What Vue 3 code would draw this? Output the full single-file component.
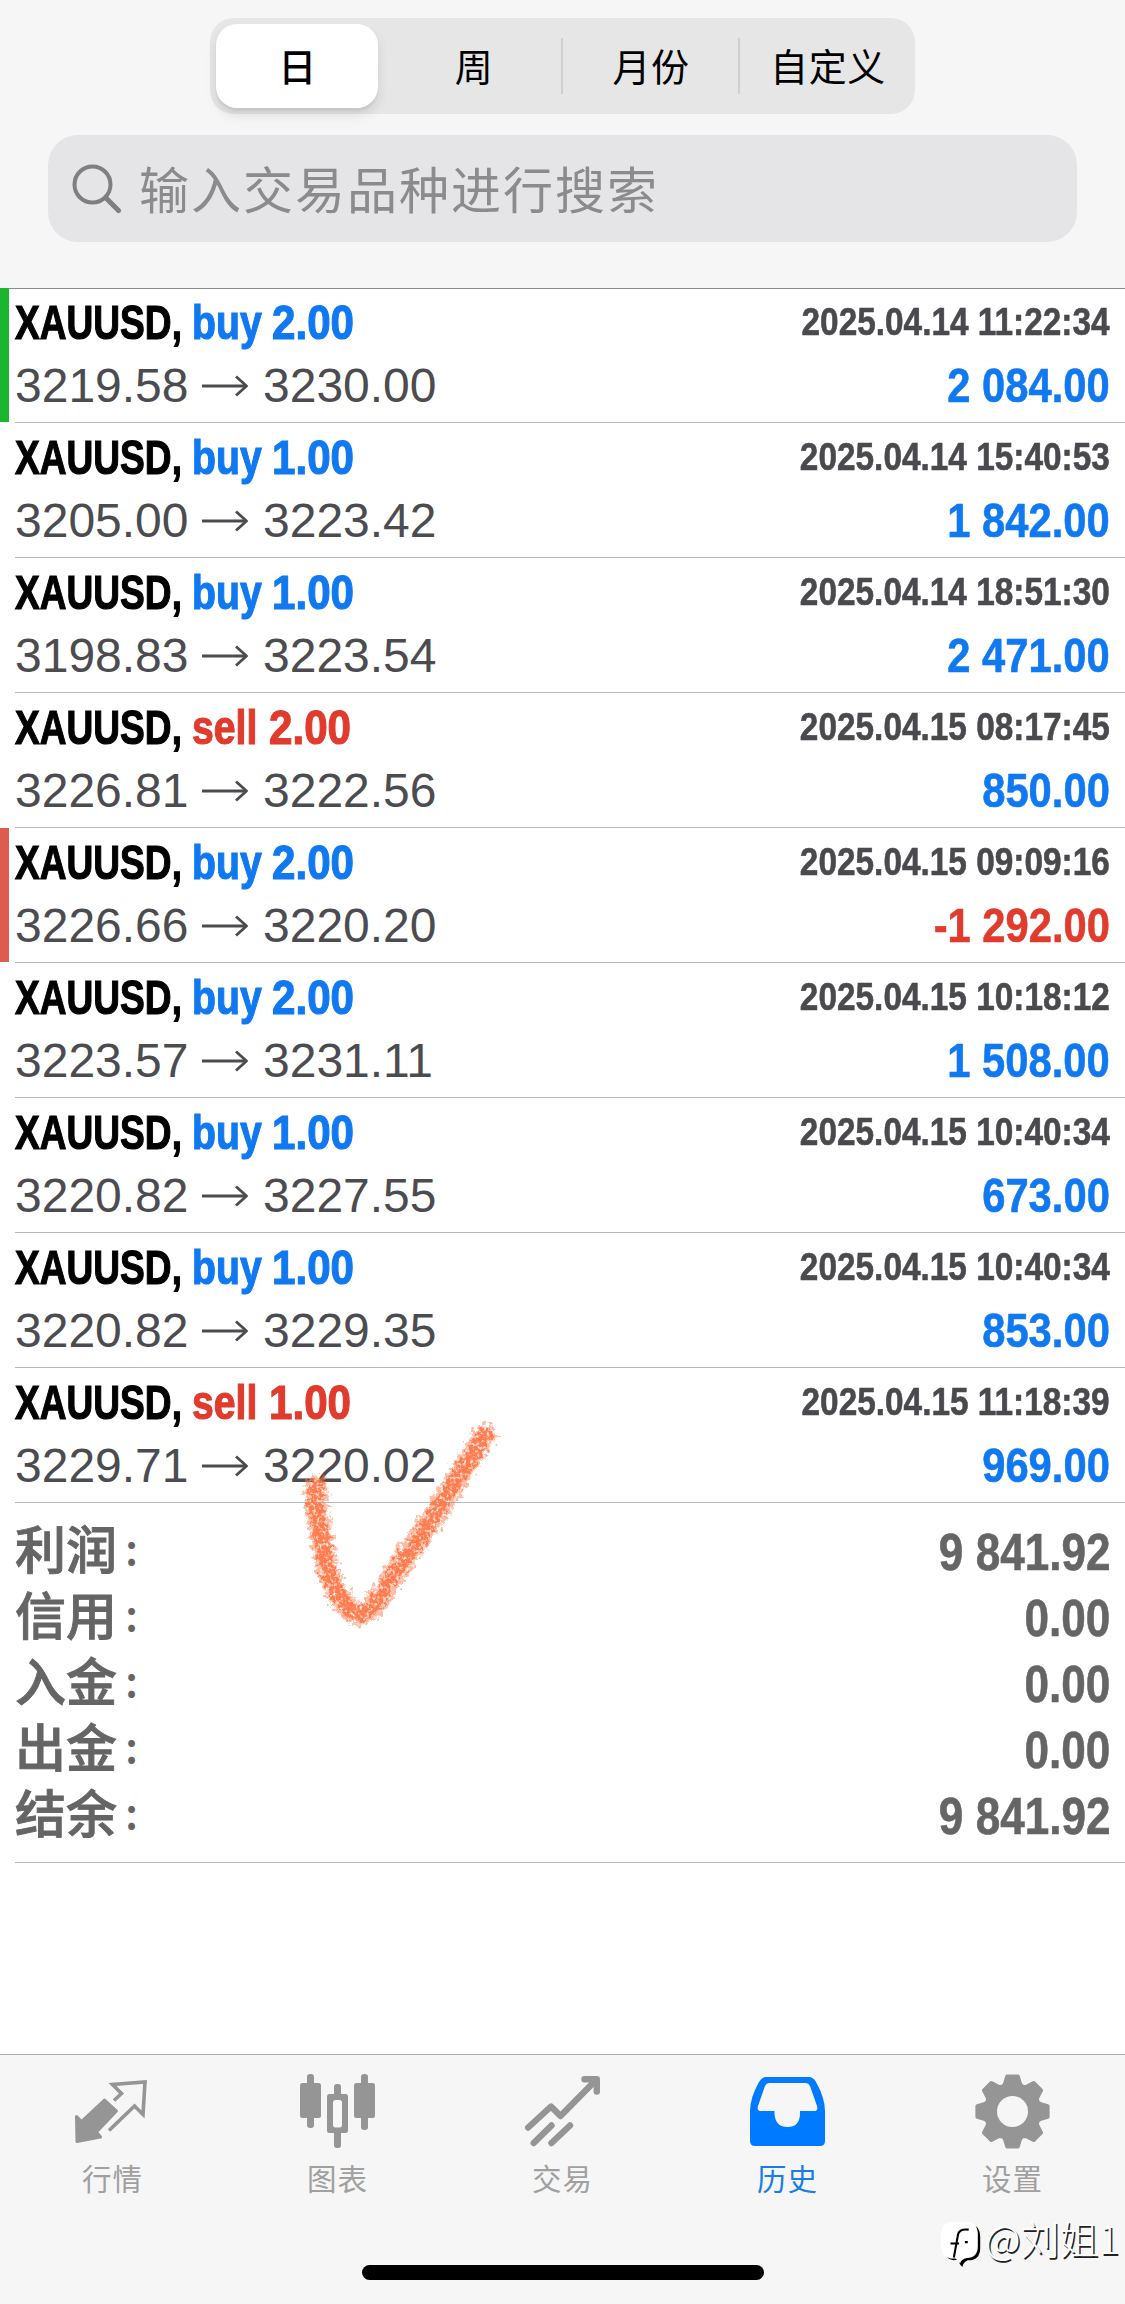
<script setup>
const ranges = ['日', '周', '月份', '自定义']

const deals = [
  { side: 'buy', volume: '2.00', open: '3219.58', close: '3230.00', time: '2025.04.14 11:22:34', profit: '2 084.00', mark: 'tp' },
  { side: 'buy', volume: '1.00', open: '3205.00', close: '3223.42', time: '2025.04.14 15:40:53', profit: '1 842.00' },
  { side: 'buy', volume: '1.00', open: '3198.83', close: '3223.54', time: '2025.04.14 18:51:30', profit: '2 471.00' },
  { side: 'sell', volume: '2.00', open: '3226.81', close: '3222.56', time: '2025.04.15 08:17:45', profit: '850.00' },
  { side: 'buy', volume: '2.00', open: '3226.66', close: '3220.20', time: '2025.04.15 09:09:16', profit: '-1 292.00', mark: 'sl' },
  { side: 'buy', volume: '2.00', open: '3223.57', close: '3231.11', time: '2025.04.15 10:18:12', profit: '1 508.00' },
  { side: 'buy', volume: '1.00', open: '3220.82', close: '3227.55', time: '2025.04.15 10:40:34', profit: '673.00' },
  { side: 'buy', volume: '1.00', open: '3220.82', close: '3229.35', time: '2025.04.15 10:40:34', profit: '853.00' },
  { side: 'sell', volume: '1.00', open: '3229.71', close: '3220.02', time: '2025.04.15 11:18:39', profit: '969.00' },
]

const totals = [
  ['利润', '9 841.92'],
  ['信用', '0.00'],
  ['入金', '0.00'],
  ['出金', '0.00'],
  ['结余', '9 841.92'],
]

const tabs = [
  { id: 'quotes', label: '行情' },
  { id: 'charts', label: '图表' },
  { id: 'trade', label: '交易' },
  { id: 'history', label: '历史', active: true },
  { id: 'settings', label: '设置' },
]

// Gear outline: eight teeth, each described by tip and root points in polar form.
const gearPoints = Array.from({ length: 8 }, (_, i) =>
  [[-20, 27], [-15.5, 28.5], [-8.5, 35.5], [8.5, 35.5], [15.5, 28.5], [20, 27]].map(([deg, r]) => {
    const a = ((i * 45 + deg) * Math.PI) / 180
    return `${(37.5 + r * Math.sin(a)).toFixed(2)},${(37.5 - r * Math.cos(a)).toFixed(2)}`
  }).join(' ')
).join(' ')
</script>

<template>
  <div class="screen">
    <header class="header">
      <div class="segments">
        <div v-for="(r, i) in ranges" :key="r" class="segment" :class="{ selected: i === 0, divided: i > 1 }">
          <span>{{ r }}</span>
        </div>
      </div>
      <div class="search">
        <svg class="lens" viewBox="0 0 50 50" fill="none" stroke="#7f7f82" stroke-linecap="round">
          <circle cx="20.5" cy="20.5" r="18" stroke-width="4" />
          <path d="M34 34L46.5 46.5" stroke-width="5" />
        </svg>
        <span>输入交易品种进行搜索</span>
      </div>
    </header>

    <main class="deals">
      <article v-for="(d, i) in deals" :key="i" class="deal" :class="d.mark">
        <div class="line">
          <span class="cell symbol"><b>XAUUSD,</b></span>
          <span class="cell side" :class="d.side"><b>{{ d.side }}</b></span>
          <span class="cell volume" :class="d.side"><b>{{ d.volume }}</b></span>
          <span class="time">{{ d.time }}</span>
        </div>
        <div class="line second">
          <span class="price">{{ d.open }}</span>
          <svg class="arrow" viewBox="0 0 46 24" fill="none" stroke="#4c4c50" stroke-width="2.8">
            <path d="M0 12H44" /><path d="M34 2.5L44.5 12L34 21.5" stroke-linejoin="round" />
          </svg>
          <span class="price">{{ d.close }}</span>
          <span class="profit" :class="{ loss: d.profit[0] === '-' }">{{ d.profit }}</span>
        </div>
      </article>
    </main>

    <section class="totals">
      <div v-for="t in totals" :key="t[0]" class="total">
        <span class="name">{{ t[0] }}</span>
        <span class="colon">:</span>
        <span class="sum">{{ t[1] }}</span>
      </div>
    </section>

    <nav class="tabbar">
      <div class="tabs">
        <div v-for="t in tabs" :key="t.id" class="tab" :class="{ active: t.active }">
          <svg class="icon" viewBox="0 0 75 75">
            <g v-if="t.id === 'quotes'">
              <path d="M29.5 26L41.5 37L21.5 58L25.5 63L2 67.5L1.5 42.5L6.5 47.5Z" fill="currentColor" stroke="currentColor" stroke-width="3" stroke-linejoin="round" />
              <path d="M39 26.5L46.5 19.5L37.5 10.5L70 8L68 40.5L59.5 32L34 56.5" fill="none" stroke="currentColor" stroke-width="3.6" stroke-linejoin="miter" />
            </g>
            <g v-else-if="t.id === 'charts'" fill="currentColor">
              <rect x="0" y="9" width="21" height="35" rx="2.5" /><rect x="7" y="0" width="7" height="54" rx="3" />
              <rect x="54" y="9" width="21" height="35" rx="2.5" /><rect x="61" y="0" width="7" height="56" rx="3" />
              <rect x="34" y="10" width="7" height="64" rx="3" /><rect x="27" y="20" width="21" height="39" rx="2.5" />
              <rect x="33" y="26" width="9" height="27.5" rx="2.5" fill="#f8f8f8" />
            </g>
            <g v-else-if="t.id === 'trade'" fill="none" stroke="currentColor" stroke-width="6.4" stroke-linecap="round" stroke-linejoin="round">
              <path d="M3.2 53.5L26 32.5L35.5 42L71 6" /><path d="M59.5 5.2H71.8V17.5" />
              <path d="M8.7 69L26.5 51.5M26.5 69L45 51.5" />
            </g>
            <path v-else-if="t.id === 'history'" fill="currentColor" fill-rule="evenodd" d="M16 3H59Q63 3 66 8Q75 24 75 37V67Q75 72 70 72H5Q0 72 0 67V37Q0 24 9 8Q12 3 16 3ZM19 9Q16.500 9 15 12L8 32Q6.500 37 11 37H24.500V40Q25.500 53 37.500 53Q49.500 53 50 40V37H64Q68.500 37 67 32L60 12Q58.500 9 56 9Z" />
            <g v-else>
              <polygon :points="gearPoints" fill="currentColor" stroke="currentColor" stroke-width="4" stroke-linejoin="round" />
              <circle cx="37.5" cy="37.500" r="15.500" fill="#f6f6f6" />
            </g>
          </svg>
          <span class="label">{{ t.label }}</span>
        </div>
      </div>
      <div class="home"></div>
    </nav>

    <!-- Hand-drawn crayon tick over the list -->
    <svg class="tick" viewBox="0 0 230 230">
      <defs>
        <filter id="crayon" x="-10%" y="-10%" width="120%" height="120%">
          <feTurbulence type="fractalNoise" baseFrequency="0.2" numOctaves="3" seed="4" result="n" />
          <feDisplacementMap in="SourceGraphic" in2="n" scale="15" xChannelSelector="R" yChannelSelector="G" result="d" />
          <feTurbulence type="fractalNoise" baseFrequency="0.3" numOctaves="2" seed="9" />
          <feColorMatrix values="0 0 0 0 0  0 0 0 0 0  0 0 0 0 0  0 0 0 -3 2.5" result="g" />
          <feComposite in="d" in2="g" operator="in" />
          <feGaussianBlur stdDeviation=".6" />
        </filter>
      </defs>
      <g filter="url(#crayon)" fill="none" stroke="#ff7747" stroke-linecap="round" stroke-linejoin="round">
        <path d="M37 76C34 96 40 120 45 147C51 174 62 200 79 204C94 204 104 178 116 161L138 130L163 92L184 57L205 25" stroke-width="23" opacity=".5" />
        <path d="M37 76C34 96 40 120 45 147C51 174 62 200 79 204C94 204 104 178 116 161L138 130L163 92L184 57L205 25" stroke-width="15" opacity=".9" />
      </g>
    </svg>

    <div class="watermark">
      <svg viewBox="0 0 42 48">
        <path d="M13 2H27Q40 2 40 16V27Q40 40 27 40Q22 42 21.500 47Q17 43 18 39L12 40Q2 38 2 27V14Q2 2 13 2Z" fill="#000" />
        <path d="M12 0H25Q37.500 0 37.500 13V25Q37.500 37.500 26 37.500Q20 39 19 43Q16 39 14 38L9 38Q-1 36 -1 25V12Q0 0 12 0Z" fill="#fff" />
        <path d="M28 8Q17 6.500 16.500 15L12.500 37M9 22.500H18M24 21H27" fill="none" stroke="#000" stroke-width="2.200" />
      </svg>
      <span>@刘姐1</span>
    </div>
  </div>
</template>

<style>
body { margin: 0; background: #fff; }
</style>

<style scoped>
.screen {
  position: relative;
  display: flex;
  flex-direction: column;
  width: 1125px;
  height: 2304px;
  overflow: hidden;
  background: #fff;
  font-family: "Liberation Sans", "Noto Sans CJK SC", sans-serif;
}
.header {
  box-sizing: border-box;
  display: flex;
  flex-direction: column;
  align-items: center;
  flex: none;
  height: 289px;
  padding-top: 18px;
  background: #f6f6f7;
  border-bottom: 1px solid #8b8b8d;
}
.segments {
  box-sizing: border-box;
  display: flex;
  align-items: center;
  width: 705px;
  height: 96px;
  border-radius: 24px;
  background: #e6e6e6;
}
.segment {
  box-sizing: border-box;
  flex: 1;
  display: flex;
  align-items: center;
  justify-content: center;
  height: 56px;
  padding-left: 1px;
  font: 400 38px/56px "Noto Sans CJK SC", sans-serif;
  letter-spacing: .6px;
  color: #000;
}
.segment span { margin-top: -3px; }
.segment.divided { border-left: 2px solid #cfcfd0; }
.segment.selected {
  flex: none;
  width: 162px;
  height: 84px;
  margin: 0 8px 0 6px;
  border-radius: 21px;
  background: #fff;
  box-shadow: 0 7px 12px rgba(0, 0, 0, .1), 0 3px 2px rgba(0, 0, 0, .05);
  font-weight: 500;
}
.search {
  box-sizing: border-box;
  display: flex;
  align-items: center;
  width: 1029px;
  height: 107px;
  margin-top: 21px;
  padding-left: 24px;
  border-radius: 30px;
  background: #e5e5e7;
  color: #8b8b8e;
  font: 400 50px/72px "Noto Sans CJK SC", sans-serif;
  letter-spacing: 2px;
}
.search span { margin-top: -4px; }
.lens { width: 50px; height: 50px; margin-right: 17px; }

.deals { flex: none; margin-top: -1px; }
.deal {
  position: relative;
  box-sizing: border-box;
  height: 135px;
  margin-left: 15px;
  padding: 4px 15px 0 0;
  border-bottom: 1px solid #b9b9bb;
}
.deal.tp::before, .deal.sl::before {
  content: "";
  position: absolute;
  left: -15px;
  top: 0;
  width: 9px;
  height: 134px;
  background: #1cb52f;
}
.deal.sl::before { background: #dd5b4f; }
.line { display: flex; height: 60px; line-height: 60px; white-space: nowrap; }
.second { margin-top: 3px; align-items: center; }
.cell { display: block; font-size: 49px; }
.cell b { display: inline-block; transform-origin: 0 50%; -webkit-text-stroke: 1.2px currentColor; }
.symbol { width: 177px; color: #000; }
.symbol b { transform: scaleX(.757); }
.side { width: 80px; }
.side.sell { width: 77px; }
.side b { transform: scaleX(.8); }
.volume { width: 90px; }
.volume b { transform: scaleX(.86); }
.buy { color: #1079f2; }
.sell { color: #e03b2c; }
.time, .profit, .sum {
  margin-left: auto;
  font-weight: 700;
  transform-origin: 100% 50%;
  -webkit-text-stroke: .6px currentColor;
}
.time { margin-top: -1px; font-size: 39.500px; color: #4a4a4e; transform: scaleX(.845); }
.price { width: 173px; padding-top: 2px; font-size: 48px; color: #4c4c50; }
.arrow { flex: none; width: 46px; height: 24px; margin: 1px 15px 0 14px; }
.profit { font-size: 49px; color: #1079f2; transform: scaleX(.852); }
.profit.loss { color: #e03b2c; }

.totals {
  box-sizing: border-box;
  flex: none;
  height: 360px;
  margin-left: 15px;
  padding: 16px 15px 0 0;
  border-bottom: 1px solid #b9b9bb;
}
.total { display: flex; height: 66px; line-height: 66px; color: #656565; }
.name { font-size: 51px; font-weight: 500; -webkit-text-stroke: .9px currentColor; }
.colon {
  margin: -6px 0 0 8px;
  font: 500 44px/66px "Noto Sans CJK SC", sans-serif;
}
.sum { font-size: 51.500px; transform: scaleX(.856); }

.tabbar {
  box-sizing: border-box;
  display: flex;
  flex-direction: column;
  align-items: center;
  height: 250px;
  margin-top: auto;
  border-top: 1px solid #acacac;
  background: #f6f6f6;
}
.tabs { display: flex; width: 1125px; height: 210px; }
.tab {
  flex: 1;
  display: flex;
  flex-direction: column;
  align-items: center;
  padding-top: 19px;
  color: #959595;
}
.icon { width: 75px; height: 75px; overflow: visible; }
.label {
  margin-top: 6px;
  font: 400 29.500px/44px "Noto Sans CJK SC", sans-serif;
  letter-spacing: 1px;
  color: #a0a0a0;
}
.tab.active { color: #007aff; }
.tab.active .label { color: #1a7ce6; }
.home { width: 402px; height: 15px; border-radius: 8px; background: #000; }

.tick { position: absolute; left: 280px; top: 1410px; width: 230px; height: 230px; }
.watermark {
  position: absolute;
  left: 941px;
  top: 2222px;
  display: flex;
  align-items: flex-start;
}
.watermark svg { width: 42px; height: 46px; overflow: visible; }
.watermark span {
  margin: -10px 0 0 2px;
  font: 300 39px/50px "Noto Sans CJK SC", sans-serif;
  color: #fff;
  text-shadow: 1.500px 1.500px 0 #222;
  white-space: nowrap;
}
</style>
